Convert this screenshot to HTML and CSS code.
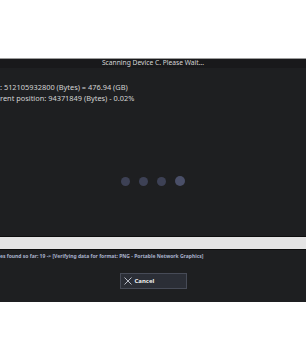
FILE: index.html
```html
<!DOCTYPE html>
<html lang="en">
<head>
    <meta charset="UTF-8">
    <meta name="viewport" content="width=device-width, initial-scale=1.0">
    <title>Scanning Device</title>
    <link rel="stylesheet" href="styles.css">
</head>
<body>
    <div class="window">
        <div class="title">Scanning Device C. Please Wait...</div>
        <div class="info">
            <div class="line">: 512105932800 (Bytes) = 476.94 (GB)</div>
            <div class="line">rent position: 94371849 (Bytes) - 0.02%</div>
        </div>
        <div class="stage">
            <div class="dots">
                <span class="dot"></span>
                <span class="dot"></span>
                <span class="dot"></span>
                <span class="dot active"></span>
            </div>
        </div>
        <div class="band"></div>
        <div class="footer">
            <div class="status">es found so far: 19 -&gt; [Verifying data for format: PNG - Portable Network Graphics]</div>
            <button class="btn">
                <svg class="icon" width="8" height="8" viewBox="0 0 8 8">
                    <path d="M0.5 0.5 L7.5 7.5 M7.5 0.5 L0.5 7.5" stroke="#c8ccd6" stroke-width="0.9" fill="none"/>
                </svg>
                <span>Cancel</span>
            </button>
        </div>
    </div>
</body>
</html>
```

FILE: styles.css
```css
body {
    margin: 0;
    background-color: #ffffff;
    font-family: "Noto Sans", "Open Sans", sans-serif;
}

.window {
    width: 306px;
    margin-top: 58px;
    border-top: 1px solid #9c9c9c;
    background-color: #1e1f21;
}

.title {
    height: 9px;
    line-height: 8px;
    font-size: 6.7px;
    text-align: center;
    color: #d6d6d6;
    background-color: #19191b;
    white-space: nowrap;
}

.info {
    padding-top: 14px;
    color: #d4d4d4;
    font-size: 7.4px;
}

.line {
    height: 11px;
    line-height: 11px;
    white-space: nowrap;
}

.stage {
    height: 132px;
}

.dots {
    display: flex;
    justify-content: center;
    align-items: center;
    gap: 9px;
    padding-top: 72px;
}

.dot {
    width: 9px;
    height: 9px;
    border-radius: 50%;
    background-color: #3d4155;
}

.dot.active {
    width: 10px;
    height: 10px;
    background-color: #4a4f68;
}

.band {
    height: 12px;
    border-top: 1px solid #0e0e0e;
    border-bottom: 1px solid #0e0e0e;
    background-color: #e4e4e4;
}

.footer {
    padding: 1px 0 13px;
    display: flex;
    flex-direction: column;
    align-items: center;
}

.status {
    align-self: flex-start;
    height: 10px;
    line-height: 10px;
    font-size: 5px;
    font-weight: bold;
    color: #a9b2cc;
    white-space: nowrap;
}

.btn {
    margin-top: 12px;
    width: 67px;
    height: 16px;
    padding: 0 0 0 3px;
    display: flex;
    align-items: center;
    gap: 3px;
    background-color: #2b2e36;
    border: 1px solid #474b57;
    color: #f0f0f0;
    font-family: inherit;
    font-size: 6px;
    font-weight: bold;
    cursor: pointer;
}

.icon {
    flex: none;
}
```
